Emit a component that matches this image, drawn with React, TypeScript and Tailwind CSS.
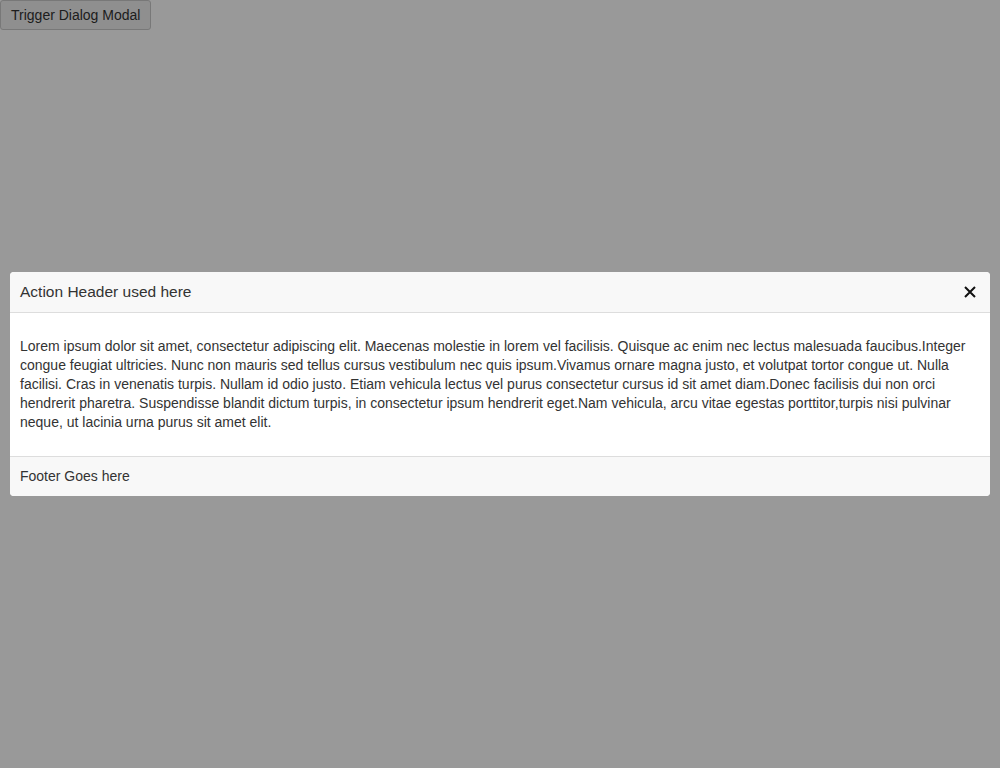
import React from "react";

export default function App() {
  return (
    <div className="relative min-h-[768px] w-full bg-white" style={{ fontFamily: '"Liberation Sans", Arial, sans-serif' }}>
      <button className="h-[30px] px-[10px] border border-[#c8c8c8] rounded-[3px] bg-[#efefef] text-[14px] text-[#333]" style={{ fontFamily: '"Liberation Sans", Arial, sans-serif' }}>
        Trigger Dialog Modal
      </button>
      <div className="absolute inset-0 bg-black/40 flex items-center justify-center px-[10px]">
        <div className="w-full bg-white rounded-[4px] overflow-hidden text-[#333]">
          <div className="h-[41px] flex items-center justify-between px-[10px] bg-[#f8f8f8] border-b border-[#dddddd]">
            <span className="text-[15.5px]">Action Header used here</span>
            <svg width="14" height="14" viewBox="0 0 14 14" className="mr-[3px]">
              <path d="M2 2 L12 12 M12 2 L2 12" stroke="#111" strokeWidth="2" />
            </svg>
          </div>
          <div className="px-[10px] py-[24px] text-[14px] leading-[19px]">
            Lorem ipsum dolor sit amet, consectetur adipiscing elit. Maecenas molestie in lorem vel facilisis. Quisque ac enim nec lectus malesuada faucibus.Integer congue feugiat ultricies. Nunc non mauris sed tellus cursus vestibulum nec quis ipsum.Vivamus ornare magna justo, et volutpat tortor congue ut. Nulla facilisi. Cras in venenatis turpis. Nullam id odio justo. Etiam vehicula lectus vel purus consectetur cursus id sit amet diam.Donec facilisis dui non orci hendrerit pharetra. Suspendisse blandit dictum turpis, in consectetur ipsum hendrerit eget.Nam vehicula, arcu vitae egestas porttitor,turpis nisi pulvinar neque, ut lacinia urna purus sit amet elit.
          </div>
          <div className="h-[40px] flex items-center px-[10px] bg-[#f8f8f8] border-t border-[#dddddd] text-[14px]">
            Footer Goes here
          </div>
        </div>
      </div>
    </div>
  );
}
